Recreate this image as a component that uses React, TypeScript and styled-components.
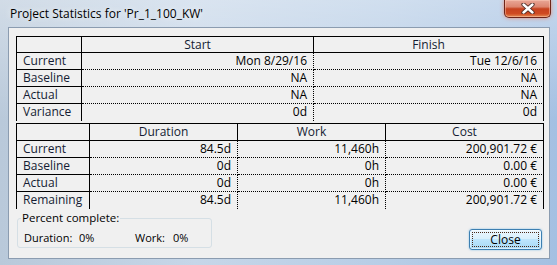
import React from "react";
import styled, { createGlobalStyle } from "styled-components";

const GlobalStyle = createGlobalStyle`
  html, body {
    margin: 0;
    padding: 0;
  }
  body {
    background: #fff;
    font-family: "Open Sans", "Noto Sans", sans-serif;
    font-size: 12px;
    color: #000;
  }
`;

const Window = styled.div`
  width: 557px;
  height: 265px;
  display: flex;
  flex-direction: column;
  overflow: hidden;
  background:
    linear-gradient(180deg, rgba(255, 255, 255, 0.35) 0%, rgba(255, 255, 255, 0) 45%),
    linear-gradient(90deg, #b9c9da 0%, #c6d6e8 35%, #b7cde6 70%, #a4c0e2 100%);
`;

const TitleBar = styled.div`
  height: 27px;
  flex: none;
  display: flex;
  align-items: flex-start;
  justify-content: space-between;
  padding: 0 6px 0 10px;
`;

const Title = styled.div`
  font-size: 12px;
  line-height: 28px;
  color: #000;
  text-shadow: 0 0 6px rgba(255, 255, 255, 0.9);
`;

const CloseX = styled.button`
  width: 47px;
  height: 18px;
  padding: 0;
  border: 1px solid #6d2418;
  border-top: none;
  border-radius: 0 0 5px 5px;
  background: linear-gradient(
    180deg,
    #e9a797 0%,
    #dd8670 40%,
    #c7421f 52%,
    #cf4a22 80%,
    #e58a52 100%
  );
  box-shadow:
    0 0 4px rgba(240, 120, 90, 0.8),
    inset 0 0 0 1px rgba(255, 210, 190, 0.45);
  display: flex;
  align-items: center;
  justify-content: center;
`;

const Client = styled.div`
  flex: 1;
  margin: 0 7px 6px 8px;
  border: 1px solid #8b9cb0;
  background: #f0f0f0;
  padding: 8px 5px 0 7px;
  display: flex;
  flex-direction: column;
`;

const Grid = styled.div<{ $cols: string; $head: number; $gap?: number }>`
  display: grid;
  grid-template-columns: ${(p) => p.$cols};
  grid-template-rows: ${(p) => p.$head}px;
  grid-auto-rows: 17px;
  border-top: 1px solid #000;
  border-left: 1px solid #000;
  margin-top: ${(p) => p.$gap ?? 0}px;
`;

const Cell = styled.div<{
  $kind: "head" | "label" | "data";
  $lastCol?: boolean;
  $lastRow?: boolean;
}>`
  box-sizing: border-box;
  font-size: 12px;
  line-height: 16px;
  white-space: nowrap;
  overflow: hidden;
  color: ${(p) => (p.$kind === "data" ? "#000" : "#141c33")};
  text-align: ${(p) =>
    p.$kind === "head" ? "center" : p.$kind === "label" ? "left" : "right"};
  padding: ${(p) =>
    p.$kind === "label" ? "0 0 0 6px" : p.$kind === "data" ? "0 6px 0 0" : "0"};
  border-right: 1px
    ${(p) => (p.$kind === "data" && !p.$lastCol ? "dotted" : "solid")} #000;
  border-bottom: ${(p) =>
    p.$lastRow
      ? "none"
      : p.$kind === "data"
        ? "1px dotted #000"
        : "1px solid #000"};
`;

const Footer = styled.div`
  display: flex;
  align-items: flex-start;
  justify-content: space-between;
  padding: 0 2px 0 1px;
`;

const GroupBox = styled.fieldset`
  width: 195px;
  height: 38px;
  box-sizing: border-box;
  margin: 1px 0 0 0;
  padding: 0 0 0 6px;
  border: 1px solid #d5dfe5;
  border-radius: 3px;
`;

const Legend = styled.legend`
  margin-left: -3px;
  padding: 0 1px;
  font-size: 11.5px;
  line-height: 16px;
  color: #000;
`;

const PctRow = styled.div`
  display: flex;
  align-items: center;
  height: 16px;
  margin-top: 4px;
`;

const PctItem = styled.span<{ $w: number }>`
  width: ${(p) => p.$w}px;
  font-size: 11px;
  line-height: 16px;
  color: #000;
  white-space: nowrap;
`;

const Button = styled.button`
  width: 73px;
  height: 21px;
  margin-top: 20px;
  padding: 0;
  font-family: inherit;
  font-size: 12px;
  line-height: 17px;
  color: #000;
  border: 1px solid #3c7fb1;
  border-radius: 3px;
  background: linear-gradient(
    180deg,
    #eaf6fd 0%,
    #d9f0fc 45%,
    #bee6fd 50%,
    #a7d9f5 100%
  );
  box-shadow:
    0 0 2px rgba(80, 170, 230, 0.7),
    inset 0 0 0 1px rgba(255, 255, 255, 0.55);
  outline: 1px dotted #4a2a1a;
  outline-offset: -4px;
`;

type Row = { label: string; values: string[] };

function StatTable({
  cols,
  head,
  gap,
  headers,
  rows,
}: {
  cols: string;
  head: number;
  gap?: number;
  headers: string[];
  rows: Row[];
}) {
  return (
    <Grid $cols={cols} $head={head} $gap={gap}>
      <Cell $kind="head" />
      {headers.map((h, i) => (
        <Cell key={h} $kind="head" $lastCol={i === headers.length - 1}>
          {h}
        </Cell>
      ))}
      {rows.map((r, ri) => {
        const lastRow = ri === rows.length - 1;
        return (
          <React.Fragment key={r.label}>
            <Cell $kind="label" $lastRow={lastRow}>
              {r.label}
            </Cell>
            {r.values.map((v, vi) => (
              <Cell
                key={vi}
                $kind="data"
                $lastRow={lastRow}
                $lastCol={vi === r.values.length - 1}
              >
                {v}
              </Cell>
            ))}
          </React.Fragment>
        );
      })}
    </Grid>
  );
}

const dates: Row[] = [
  { label: "Current", values: ["Mon 8/29/16", "Tue 12/6/16"] },
  { label: "Baseline", values: ["NA", "NA"] },
  { label: "Actual", values: ["NA", "NA"] },
  { label: "Variance", values: ["0d", "0d"] },
];

const totals: Row[] = [
  { label: "Current", values: ["84.5d", "11,460h", "200,901.72 €"] },
  { label: "Baseline", values: ["0d", "0h", "0.00 €"] },
  { label: "Actual", values: ["0d", "0h", "0.00 €"] },
  { label: "Remaining", values: ["84.5d", "11,460h", "200,901.72 €"] },
];

export default function App() {
  return (
    <>
      <GlobalStyle />
      <Window>
        <TitleBar>
          <Title>Project Statistics for 'Pr_1_100_KW'</Title>
          <CloseX type="button" aria-label="Close window">
            <svg width="14" height="11" viewBox="0 0 14 11">
              <path
                d="M2.5 1.5 L11.5 9.5 M11.5 1.5 L2.5 9.5"
                stroke="#4a2a24"
                strokeWidth="4.2"
                strokeLinecap="round"
              />
              <path
                d="M2.5 1.5 L11.5 9.5 M11.5 1.5 L2.5 9.5"
                stroke="#fff"
                strokeWidth="2.4"
                strokeLinecap="round"
              />
            </svg>
          </CloseX>
        </TitleBar>
        <Client>
          <StatTable
            cols="65px 232px 230px"
            head={16}
            headers={["Start", "Finish"]}
            rows={dates}
          />
          <StatTable
            cols="73px 148px 148px 158px"
            head={17}
            gap={2}
            headers={["Duration", "Work", "Cost"]}
            rows={totals}
          />
          <Footer>
            <GroupBox>
              <Legend>Percent complete:</Legend>
              <PctRow>
                <PctItem $w={55}>Duration:</PctItem>
                <PctItem $w={56}>0%</PctItem>
                <PctItem $w={38}>Work:</PctItem>
                <PctItem $w={30}>0%</PctItem>
              </PctRow>
            </GroupBox>
            <Button type="button">Close</Button>
          </Footer>
        </Client>
      </Window>
    </>
  );
}
